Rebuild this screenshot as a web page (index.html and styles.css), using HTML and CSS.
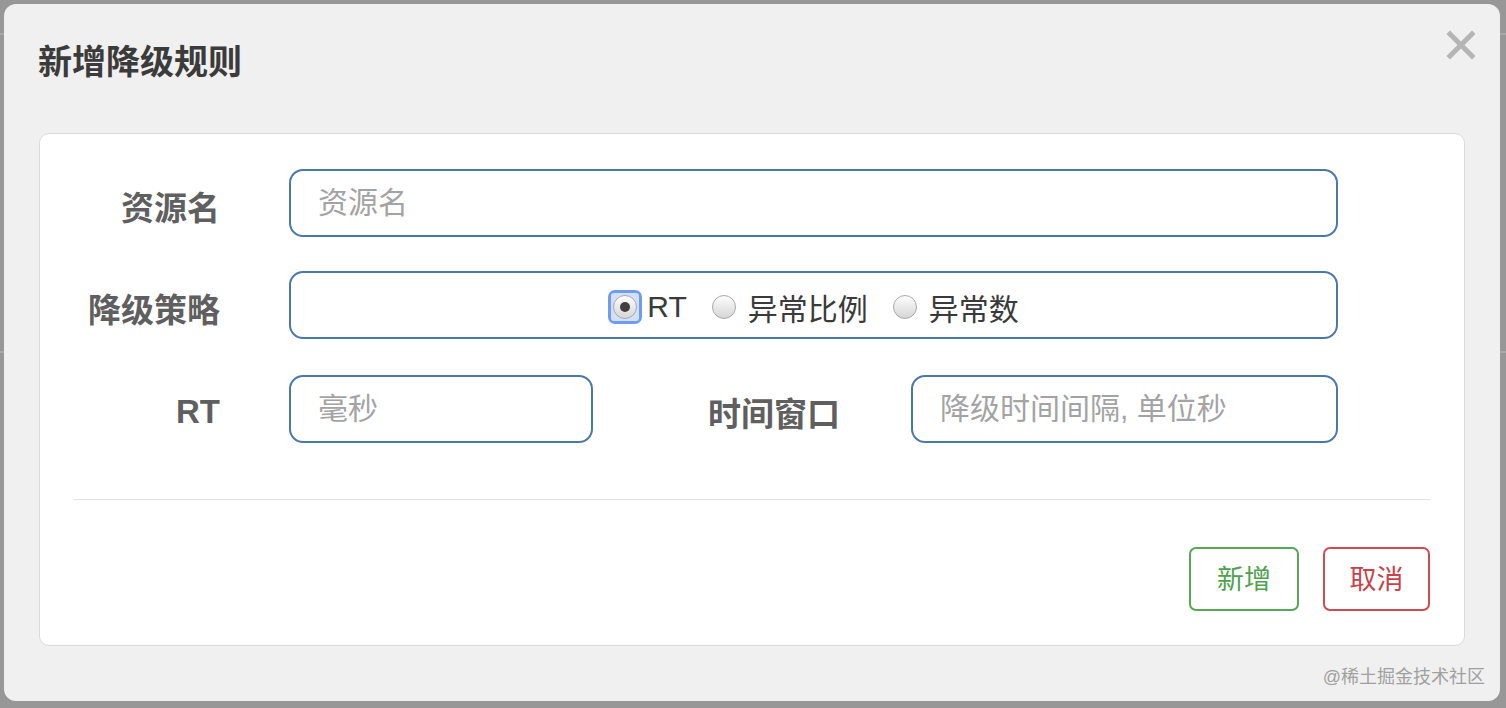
FILE: index.html
```html
<!DOCTYPE html>
<html lang="zh-CN">
<head>
    <meta charset="UTF-8">
    <title>新增降级规则</title>
    <link rel="stylesheet" href="styles.css">
</head>
<body>
    <!-- 弹窗 -->
    <div class="modal">
        <button class="close-btn" type="button">
            <svg width="30" height="30" viewBox="0 0 30 30">
                <path d="M4 4 L26 26 M26 4 L4 26" stroke="#b5b5b5" stroke-width="5" stroke-linecap="square"/>
            </svg>
        </button>
        <h3 class="modal-title">新增降级规则</h3>

        <div class="panel">
            <form class="rule-form">
                <div class="form-row">
                    <label class="form-label">资源名</label>
                    <input class="form-input input-full" type="text" placeholder="资源名">
                </div>
                <div class="form-row">
                    <label class="form-label">降级策略</label>
                    <div class="form-input input-full radio-box">
                        <span class="focus-ring"><span class="focus-inner"><span class="radio checked"></span></span></span>
                        <span class="radio-text">RT</span>
                        <span class="radio"></span>
                        <span class="radio-text">异常比例</span>
                        <span class="radio"></span>
                        <span class="radio-text">异常数</span>
                    </div>
                </div>
                <div class="form-row row-last">
                    <label class="form-label">RT</label>
                    <input class="form-input input-short" type="text" placeholder="毫秒">
                    <label class="form-label label-wide">时间窗口</label>
                    <input class="form-input input-mid" type="text" placeholder="降级时间间隔, 单位秒">
                </div>
            </form>

            <hr class="divider">

            <div class="actions">
                <button class="btn btn-green" type="button">新增</button>
                <button class="btn btn-red" type="button">取消</button>
            </div>
        </div>

        <div class="watermark">@稀土掘金技术社区</div>
    </div>
</body>
</html>
```

FILE: styles.css
```css
/* Общие стили */
body {
    margin: 0;
    padding: 4px;
    height: 708px;
    box-sizing: border-box;
    overflow: hidden;
    background:
        linear-gradient(#a9a9a9, #a9a9a9) 0 33px / 100% 2px no-repeat,
        linear-gradient(#a9a9a9, #a9a9a9) 0 351px / 100% 2px no-repeat,
        #979797;
    font-family: "Liberation Sans", "Noto Sans CJK SC", sans-serif;
}

/* Окно */
.modal {
    position: relative;
    width: 1496px;
    height: 697px;
    box-sizing: border-box;
    padding: 34px 35px 0;
    background: #f0f0f0;
    border-radius: 12px;
}

.modal-title {
    margin: 0 0 47px -1px;
    font-size: 34px;
    line-height: 48px;
    font-weight: bold;
    color: #3b3b3b;
}

.close-btn {
    position: absolute;
    top: 26px;
    right: 24px;
    padding: 0;
    border: 0;
    background: none;
    line-height: 0;
}

/* Панель формы */
.panel {
    background: #fff;
    border: 1px solid #dadada;
    border-radius: 10px;
    padding: 35px 34px 34px;
}

.rule-form {
    display: flex;
    flex-direction: column;
    gap: 34px;
}

.form-row {
    display: flex;
    align-items: center;
}

.row-last {
    margin-top: 2px;
}

.form-label {
    width: 146px;
    margin-right: 69px;
    padding-top: 6px;
    text-align: right;
    font-size: 33px;
    font-weight: bold;
    color: #5f5f5f;
    flex-shrink: 0;
}

.label-wide {
    width: 247px;
    margin-right: 71px;
}

.form-input {
    height: 68px;
    box-sizing: border-box;
    border: 2px solid #4c78a9;
    border-radius: 14px;
    padding: 0 27px;
    font-family: inherit;
    font-size: 30px;
    color: #333;
    background: #fff;
    outline: none;
}

.form-input::placeholder {
    color: #a3a3a3;
}

.input-full {
    width: 1049px;
}

.input-short {
    width: 304px;
}

.input-mid {
    width: 427px;
}

/* Переключатели */
.radio-box {
    display: flex;
    align-items: center;
    justify-content: center;
    padding-top: 3px;
}

.radio {
    width: 24px;
    height: 24px;
    box-sizing: border-box;
    border: 1px solid #a8a8a8;
    border-radius: 50%;
    background: linear-gradient(#fdfdfd, #d6d6d6);
    display: flex;
    align-items: center;
    justify-content: center;
    flex-shrink: 0;
}

.radio.checked::after {
    content: "";
    width: 10px;
    height: 10px;
    border-radius: 50%;
    background: #3f3f3f;
}

.focus-ring {
    padding: 3px;
    background: #6f9cf2;
    border-radius: 7px;
    margin-right: 5px;
}

.focus-inner {
    display: block;
    padding: 2px;
    background: #d4e0f8;
    border-radius: 3px;
}

.radio-text {
    font-size: 30px;
    color: #3a3a3a;
    margin-right: 25px;
}

.radio + .radio-text {
    margin-left: 12px;
}

.radio-text:last-child {
    margin-right: 0;
}

.divider {
    border: 0;
    border-top: 1px solid #e3e3e3;
    margin: 56px 0 47px;
}

/* Кнопки */
.actions {
    display: flex;
    justify-content: flex-end;
    gap: 24px;
}

.btn {
    height: 64px;
    box-sizing: border-box;
    padding: 0 0 3px;
    background: #fff;
    border: 2px solid;
    border-radius: 7px;
    font-family: inherit;
    font-size: 27px;
    white-space: nowrap;
}

.btn-green {
    color: #4ea24e;
    border-color: #56a756;
    width: 110px;
}

.btn-red {
    color: #c9424a;
    border-color: #cf4b52;
    width: 107px;
}

.watermark {
    position: absolute;
    right: 15px;
    bottom: 13px;
    font-size: 18px;
    color: #a0a0a0;
}
```
